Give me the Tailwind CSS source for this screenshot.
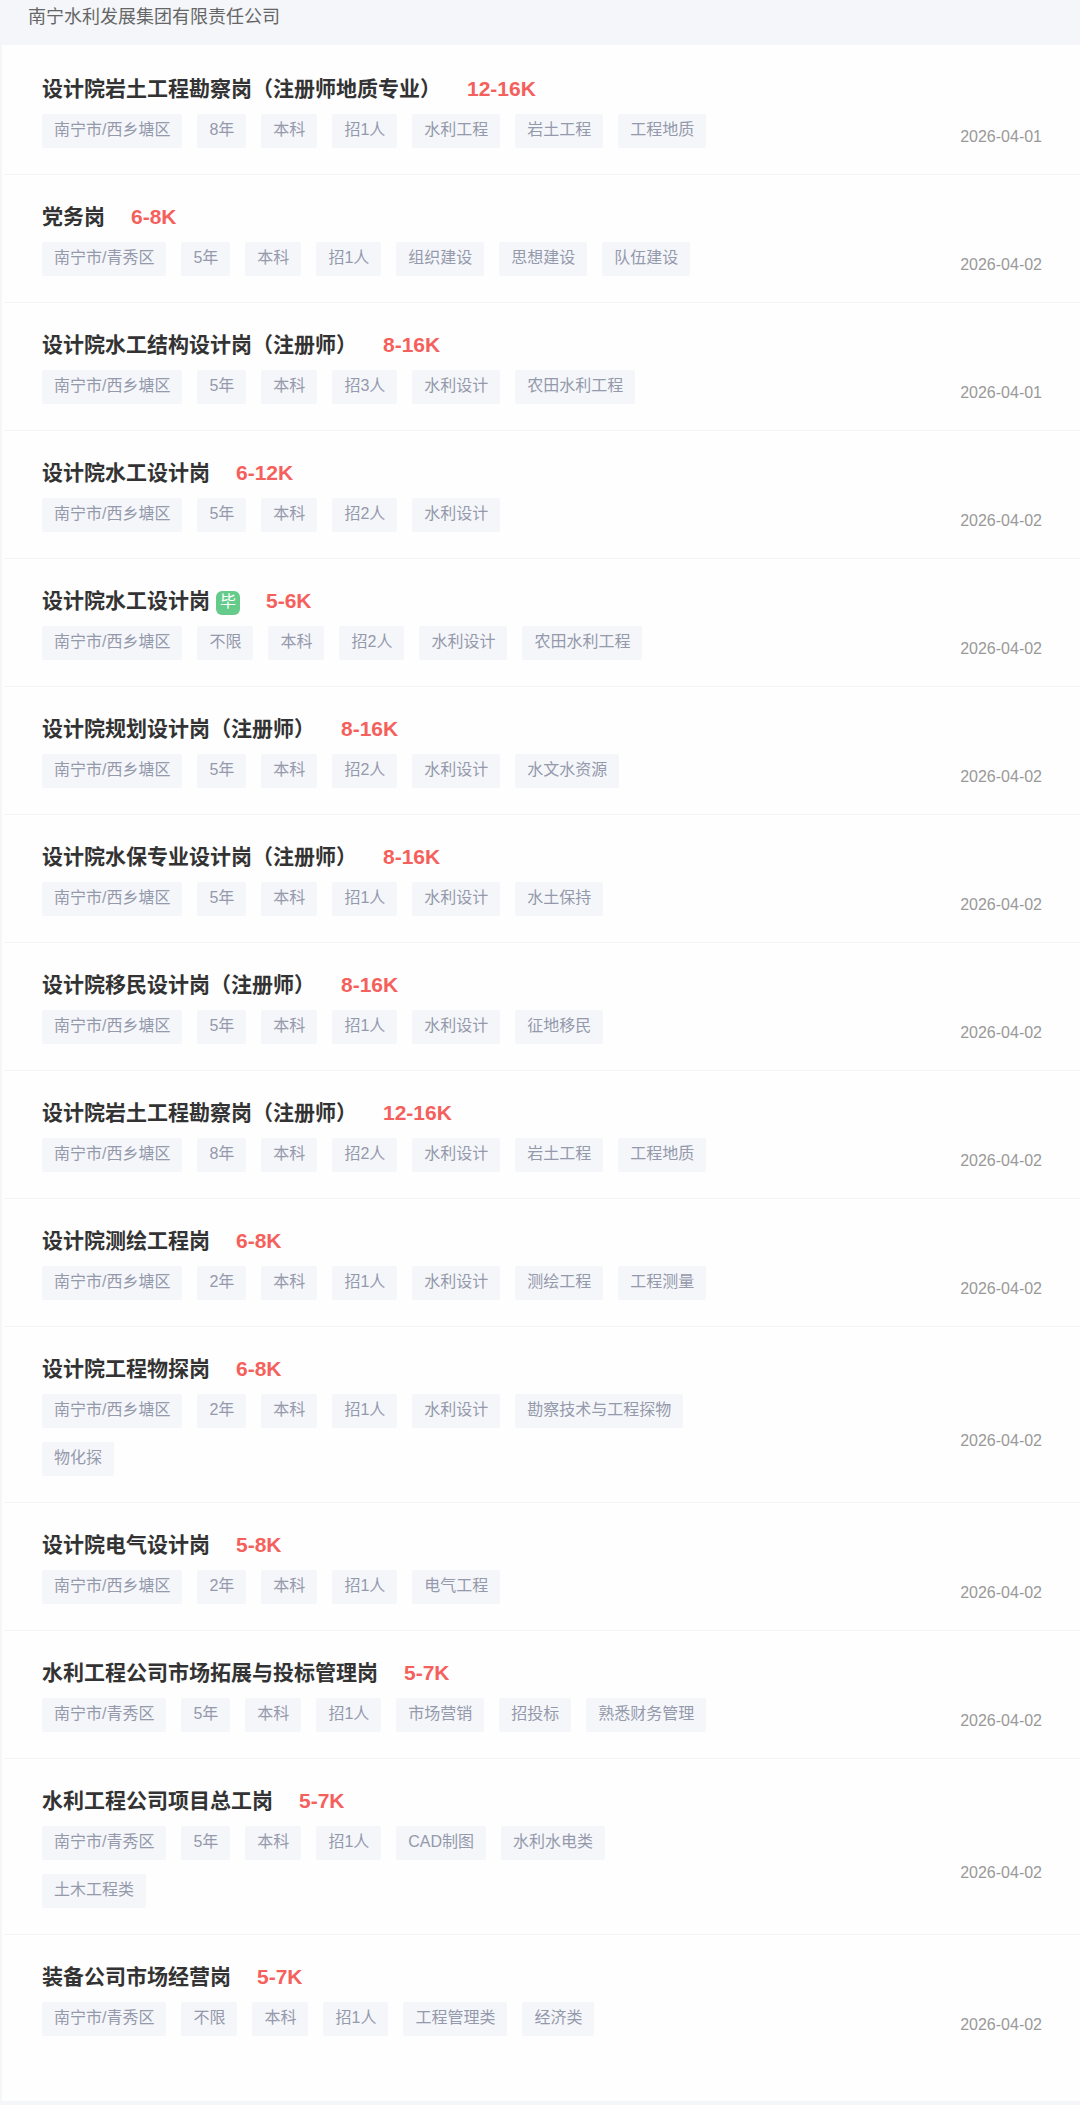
<!DOCTYPE html>
<html lang="zh-CN">
<head>
  <meta charset="UTF-8">
  <meta name="viewport" content="width=device-width, initial-scale=1.0">
  <title>南宁水利发展集团有限责任公司</title>
  <script src="https://cdn.jsdelivr.net/npm/@tailwindcss/browser@4"></script>
</head>
<body class="bg-[#f4f6fa] font-['Liberation_Sans','Noto_Sans_CJK_SC',sans-serif]">
  <!-- Company -->
  <header class="px-7 pt-[5px] pb-4">
    <h1 class="text-lg leading-6 text-[#666]">南宁水利发展集团有限责任公司</h1>
  </header>

  <!-- Job List -->
  <main class="ml-[2px] mb-1 bg-[#fefefe] pt-[2px] pb-[38px]">
    <ul id="jobList" class="pl-[2px]"></ul>
  </main>

  <script>
    const west = '南宁市/西乡塘区';
    const east = '南宁市/青秀区';

    const jobs = [
      { title: '设计院岩土工程勘察岗（注册师地质专业）', salary: '12-16K', date: '2026-04-01', tags: [west, '8年', '本科', '招1人', '水利工程', '岩土工程', '工程地质'] },
      { title: '党务岗', salary: '6-8K', date: '2026-04-02', tags: [east, '5年', '本科', '招1人', '组织建设', '思想建设', '队伍建设'] },
      { title: '设计院水工结构设计岗（注册师）', salary: '8-16K', date: '2026-04-01', tags: [west, '5年', '本科', '招3人', '水利设计', '农田水利工程'] },
      { title: '设计院水工设计岗', salary: '6-12K', date: '2026-04-02', tags: [west, '5年', '本科', '招2人', '水利设计'] },
      { title: '设计院水工设计岗', badge: '毕', salary: '5-6K', date: '2026-04-02', tags: [west, '不限', '本科', '招2人', '水利设计', '农田水利工程'] },
      { title: '设计院规划设计岗（注册师）', salary: '8-16K', date: '2026-04-02', tags: [west, '5年', '本科', '招2人', '水利设计', '水文水资源'] },
      { title: '设计院水保专业设计岗（注册师）', salary: '8-16K', date: '2026-04-02', tags: [west, '5年', '本科', '招1人', '水利设计', '水土保持'] },
      { title: '设计院移民设计岗（注册师）', salary: '8-16K', date: '2026-04-02', tags: [west, '5年', '本科', '招1人', '水利设计', '征地移民'] },
      { title: '设计院岩土工程勘察岗（注册师）', salary: '12-16K', date: '2026-04-02', tags: [west, '8年', '本科', '招2人', '水利设计', '岩土工程', '工程地质'] },
      { title: '设计院测绘工程岗', salary: '6-8K', date: '2026-04-02', tags: [west, '2年', '本科', '招1人', '水利设计', '测绘工程', '工程测量'] },
      { title: '设计院工程物探岗', salary: '6-8K', date: '2026-04-02', tags: [west, '2年', '本科', '招1人', '水利设计', '勘察技术与工程探物', '物化探'] },
      { title: '设计院电气设计岗', salary: '5-8K', date: '2026-04-02', tags: [west, '2年', '本科', '招1人', '电气工程'] },
      { title: '水利工程公司市场拓展与投标管理岗', salary: '5-7K', date: '2026-04-02', tags: [east, '5年', '本科', '招1人', '市场营销', '招投标', '熟悉财务管理'] },
      { title: '水利工程公司项目总工岗', salary: '5-7K', date: '2026-04-02', tags: [east, '5年', '本科', '招1人', 'CAD制图', '水利水电类', '土木工程类'] },
      { title: '装备公司市场经营岗', salary: '5-7K', date: '2026-04-02', tags: [east, '不限', '本科', '招1人', '工程管理类', '经济类'] },
    ];

    const badge = text => `<span class="ml-[6px] mt-[3px] size-6 rounded-md bg-[#65cb8b] text-center text-base leading-[22px] text-white">${text}</span>`;
    const tag = text => `<li class="h-[34px] rounded-xs bg-[#f4f6fa] px-3 leading-8">${text}</li>`;

    document.getElementById('jobList').innerHTML = jobs.map(job => `
      <li class="flex items-center justify-between border-b border-[#f2f4f6] pt-[27px] pr-[38px] pb-[26px] pl-[38px] last:border-transparent">
        <div>
          <div class="flex items-center text-[21px] leading-[30px]">
            <h2 class="font-bold text-[#333]"><a href="#">${job.title}</a></h2>
            ${job.badge ? badge(job.badge) : ''}
            <span class="ml-[26px] font-bold text-[#f5605c]">${job.salary}</span>
          </div>
          <ul class="mt-[10px] flex max-w-2xl flex-wrap gap-x-[15px] gap-y-[14px] text-base text-[#9499ab]">
            ${job.tags.map(tag).join('')}
          </ul>
        </div>
        <time class="shrink-0 pt-13 text-base leading-5 text-[#999]">${job.date}</time>
      </li>`).join('');
  </script>
</body>
</html>
